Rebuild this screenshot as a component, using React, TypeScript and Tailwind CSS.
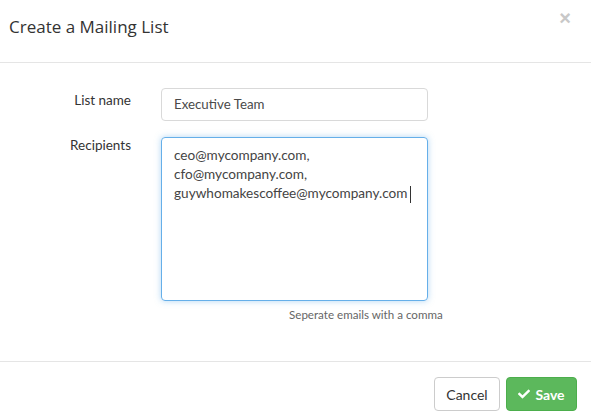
import React from "react";
import { FaCheck } from "react-icons/fa";

export default function App() {
  return (
    <div className="w-[591px] h-[420px] bg-white overflow-hidden" style={{ fontFamily: "Lato, 'Open Sans', sans-serif" }}>
      <div className="h-[62px] border-b border-[#e5e5e5] flex justify-between items-start box-content">
        <h1 className="pl-[9px] pt-[14px] text-[17px] leading-[26px] text-[#333]" style={{ fontFamily: "'Open Sans', sans-serif" }}>
          Create a Mailing List
        </h1>
        <span className="mr-[20px] mt-[6px] text-[20px] leading-[24px] font-bold text-[#c8c8c8]" style={{ fontFamily: "'Liberation Sans', sans-serif" }}>×</span>
      </div>
      <div className="h-[298px] pt-[25px]">
        <div className="flex items-start">
          <label className="w-[131px] text-right text-[13.5px] leading-[20px] pt-[2px] text-[#333]">List name</label>
          <div className="ml-[30px] w-[267px] h-[33px] border border-[#d9d9d9] rounded-[4px] px-[12px] flex items-center text-[13.3px] text-[#4a4a4a]">
            Executive Team
          </div>
        </div>
        <div className="flex items-start mt-[16px]">
          <label className="w-[131px] text-right text-[13.5px] leading-[20px] -mt-[2px] text-[#333]">Recipients</label>
          <div className="ml-[30px] w-[267px] h-[164px] border border-[#66afe9] rounded-[4px] px-[12px] pt-[8px] text-[13.6px] leading-[19px] text-[#444] shadow-[0_0_6px_rgba(102,175,233,0.5)]">
            <div>ceo@mycompany.com,</div>
            <div>cfo@mycompany.com,</div>
            <div className="whitespace-nowrap">
              guywhomakescoffee@mycompany.com
              <span className="inline-block w-px h-[17px] bg-[#333] align-middle ml-[2px]" />
            </div>
          </div>
        </div>
        <div className="mt-[6px] pl-[289px] text-[11.6px] leading-[16px] text-[#666]">Seperate emails with a comma</div>
      </div>
      <div className="border-t border-[#e5e5e5] pt-[15px] pr-[14px] flex justify-end gap-[6px]">
        <button className="h-[34px] w-[66px] border border-[#ccc] rounded-[4px] bg-white text-[14px] text-[#333]">Cancel</button>
        <button className="h-[34px] w-[71px] border border-[#4cae4c] rounded-[4px] bg-[#5cb85c] text-[14px] font-bold text-white flex items-center justify-center gap-[5px]">
          <FaCheck className="w-[12px] h-[12px]" />
          Save
        </button>
      </div>
    </div>
  );
}
